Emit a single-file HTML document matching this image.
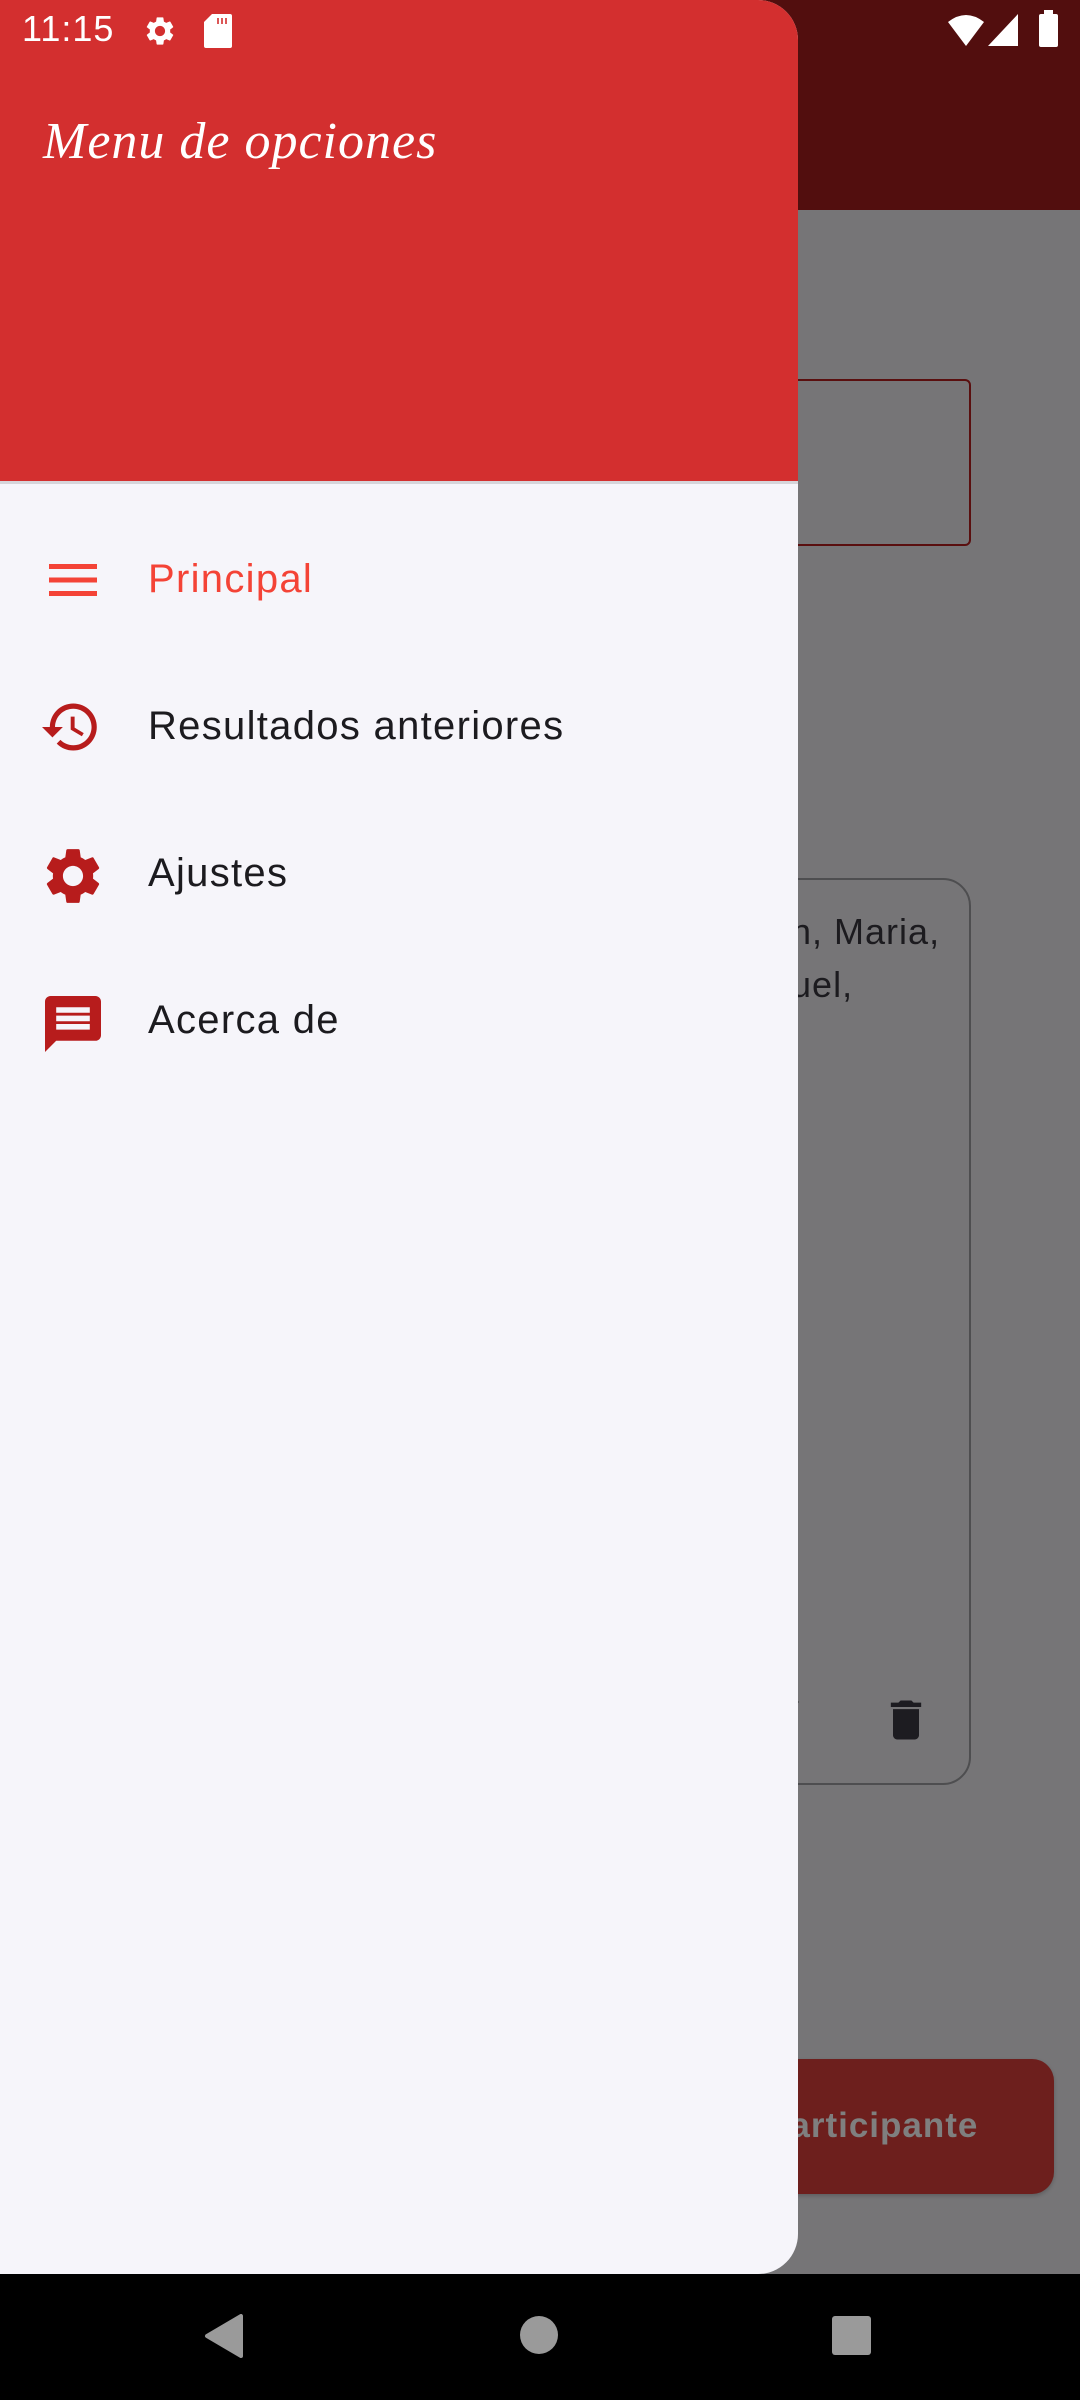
<!DOCTYPE html>
<html><head><meta charset="utf-8"><style>
*{margin:0;padding:0;box-sizing:border-box}
body{width:1080px;height:2400px;position:relative;overflow:hidden;background:#767577;font-family:"Liberation Sans",sans-serif}
.abs{position:absolute}
.it{font-size:40px;letter-spacing:1.3px;color:#1c1b1f}
</style></head><body>
<!-- background app -->
<div class="abs" style="left:0;top:0;width:1080px;height:210px;background:#520e0e"></div>
<div class="abs" style="left:700px;top:379px;width:271px;height:167px;border:2px solid #5a0f0f;border-radius:6px"></div>
<div class="abs" style="left:700px;top:878px;width:271px;height:907px;border:2px solid #4e4e50;border-radius:28px"></div>
<div class="abs" style="left:770px;top:905px;font-size:36px;letter-spacing:1px;color:#1c1b1f;line-height:53px">an, Maria,<br>guel,</div>
<div class="abs" style="left:785px;top:1692px;width:0;height:0;border-left:14px solid #1c1b1f;border-top:10px solid transparent;border-bottom:10px solid transparent"></div>
<svg class="abs" style="left:880px;top:1694px" width="52" height="52" viewBox="0 0 24 24"><path fill="#1d1c21" d="M6 19c0 1.1.9 2 2 2h8c1.1 0 2-.9 2-2V7H6v12zM19 4h-3.5l-1-1h-5l-1 1H5v2h14V4z"/></svg>
<div class="abs" style="left:740px;top:2059px;width:314px;height:135px;background:#6d1f1d;border-radius:22px;box-shadow:0 2px 4px rgba(0,0,0,.2)"></div>
<div class="abs" style="left:768px;top:2106px;font-size:35px;letter-spacing:1px;font-weight:bold;color:#7f7f7f">participante</div>
<!-- status icons right -->
<svg class="abs" style="left:946px;top:14px" width="40" height="34" viewBox="0 0 20 17"><path fill="#fff" d="M10 16 L1 4 Q10 -3 19 4 Z"/></svg>
<svg class="abs" style="left:988px;top:14px" width="30" height="32" viewBox="0 0 15 16"><path fill="#fff" d="M15 0V16H0Z"/></svg>
<div class="abs" style="left:1039px;top:14px;width:19px;height:33px;background:#fff;border-radius:2px"></div>
<div class="abs" style="left:1044px;top:10px;width:9px;height:5px;background:#fff"></div>
<!-- drawer -->
<div class="abs" style="left:0;top:0;width:798px;height:2274px;background:#f6f5fa;border-radius:0 40px 40px 0;overflow:hidden">
  <div class="abs" style="left:0;top:0;width:798px;height:484px;background:#d32f2f;border-bottom:3px solid #d6d5da"></div>
  <div class="abs" style="left:22px;top:8px;font-size:36px;letter-spacing:1px;color:#fff">11:15</div>
  <svg class="abs" style="left:143px;top:14px" width="34" height="34" viewBox="0 0 24 24"><path fill="#fff" d="M19.14 12.94c.04-.3.06-.61.06-.94 0-.32-.02-.64-.07-.94l2.03-1.58a.49.49 0 0 0 .12-.61l-1.92-3.32a.488.488 0 0 0-.59-.22l-2.390.96c-.5-.38-1.030-.7-1.620-.94l-.36-2.54a.484.484 0 0 0-.48-.41h-3.840c-.24 0-.43.17-.47.41l-.36 2.54c-.59.24-1.13.57-1.62.94l-2.39-.96c-.22-.08-.47 0-.59.22L2.74 8.87c-.12.21-.08.47.12.61l2.03 1.58c-.05.3-.09.63-.09.94s.02.64.07.94l-2.03 1.58a.49.49 0 0 0-.12.61l1.92 3.32c.12.22.37.29.59.22l2.39-.96c.5.38 1.03.7 1.62.94l.36 2.54c.05.24.24.41.48.41h3.84c.24 0 .44-.17.47-.41l.36-2.54c.59-.24 1.13-.56 1.62-.94l2.39.96c.22.08.47 0 .59-.22l1.92-3.32c.12-.22.07-.47-.12-.61l-2.01-1.58zM12 15.6c-1.98 0-3.6-1.62-3.6-3.6s1.62-3.6 3.6-3.6 3.6 1.62 3.6 3.6-1.62 3.6-3.6 3.6z"/></svg>
  <svg class="abs" style="left:204px;top:14px" width="28" height="34" viewBox="0 0 14 17"><path fill="#fff" d="M4 0H13Q14 0 14 1V16Q14 17 13 17H1Q0 17 0 16V4Z"/><path stroke="#d32f2f" stroke-width=".8" d="M7 2V5M9 2V5M11 2V5"/></svg>
  <div class="abs" style="left:43px;top:112px;font-family:'Liberation Serif',serif;font-style:italic;font-size:52px;color:#fff;letter-spacing:1px">Menu de opciones</div>
  <!-- items -->
  <svg class="abs" style="left:47px;top:562px" width="52" height="36" viewBox="0 0 26 18"><path fill="#f44336" d="M1 1h24v2.5H1zM1 7.75h24v2.5H1zM1 14.5h24v2.5H1z"/></svg>
  <div class="abs it" style="left:148px;top:557px;color:#f44336">Principal</div>
  <svg class="abs" style="left:42px;top:699px" width="60" height="56" viewBox="1 2 23 20"><path fill="#b71c1c" d="M13 3a9 9 0 0 0-9 9H1l3.89 3.89.07.14L9 12H6c0-3.87 3.130-7 7-7s7 3.13 7 7-3.13 7-7 7c-1.93 0-3.68-.79-4.94-2.06l-1.42 1.42A8.954 8.954 0 0 0 13 21a9 9 0 0 0 0-18zm-1 5v5l4.28 2.54.72-1.21-3.5-2.08V8H12z"/></svg>
  <div class="abs it" style="left:148px;top:704px">Resultados anteriores</div>
  <svg class="abs" style="left:43px;top:848px" width="60" height="56" viewBox="2.5 2 19 20"><path fill="#b71c1c" d="M19.14 12.94c.04-.3.06-.61.06-.94 0-.32-.02-.64-.07-.94l2.03-1.58a.49.49 0 0 0 .12-.61l-1.92-3.32a.488.488 0 0 0-.59-.22l-2.39.96c-.5-.38-1.03-.7-1.62-.94l-.36-2.54a.484.484 0 0 0-.48-.41h-3.84c-.24 0-.43.17-.47.41l-.36 2.54c-.59.24-1.13.57-1.62.94l-2.39-.96c-.22-.08-.47 0-.59.22L2.74 8.87c-.12.21-.08.47.12.61l2.03 1.58c-.05.3-.09.63-.09.94s.02.64.07.94l-2.03 1.58a.49.49 0 0 0-.12.61l1.92 3.32c.12.22.37.29.59.22l2.39-.96c.5.38 1.03.7 1.62.94l.36 2.54c.05.24.24.41.48.41h3.84c.24 0 .44-.17.47-.41l.36-2.54c.59-.24 1.13-.56 1.62-.94l2.39.96c.22.08.47 0 .59-.22l1.92-3.32c.12-.22.07-.47-.12-.61l-2.01-1.58zM12 15.6c-1.98 0-3.6-1.62-3.6-3.6s1.62-3.6 3.6-3.6 3.6 1.62 3.6 3.6-1.62 3.6-3.6 3.6z"/></svg>
  <div class="abs it" style="left:148px;top:851px">Ajustes</div>
  <svg class="abs" style="left:44px;top:996px" width="58" height="56" viewBox="2 2 20 20"><path fill="#b71c1c" d="M20 2H4c-1.1 0-2 .9-2 2v18l4-4h14c1.1 0 2-.9 2-2V4c0-1.1-.9-2-2-2zM18 14H6v-2h12v2zm0-3H6V9h12v2zm0-3H6V6h12v2z"/></svg>
  <div class="abs it" style="left:148px;top:998px">Acerca de</div>
</div>
<!-- nav bar -->
<div class="abs" style="left:0;top:2274px;width:1080px;height:126px;background:#000"></div>
<svg class="abs" style="left:203px;top:2314px" width="42" height="44" viewBox="0 0 21 22"><path fill="#9a9a9a" d="M19 1V21L2 11Z" stroke="#9a9a9a" stroke-linejoin="round" stroke-width="2"/></svg>
<div class="abs" style="left:520px;top:2316px;width:38px;height:38px;border-radius:50%;background:#9a9a9a"></div>
<div class="abs" style="left:832px;top:2316px;width:39px;height:39px;border-radius:3px;background:#9a9a9a"></div>
</body></html>
